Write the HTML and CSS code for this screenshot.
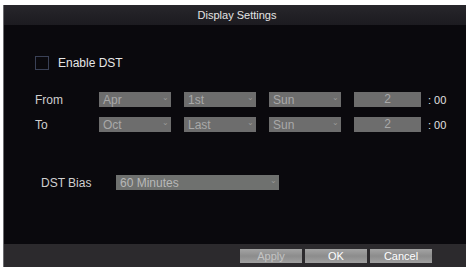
FILE: index.html
```html
<!DOCTYPE html>
<html lang="en">
<head>
  <meta charset="UTF-8">
  <title>Display Settings</title>
  <link rel="stylesheet" href="styles.css">
</head>
<body>

  <div class="dialog">
    <div class="title-bar">Display Settings</div>

    <div class="content">
      <label class="check-row">
        <span class="checkbox"></span>
        <span>Enable DST</span>
      </label>

      <div class="date-row first">
        <span class="row-label">From</span>
        <div class="select">Apr <span class="arrow">&#8964;</span></div>
        <div class="select">1st <span class="arrow">&#8964;</span></div>
        <div class="select">Sun <span class="arrow">&#8964;</span></div>
        <div class="hour">2</div>
        <span class="minutes">: 00</span>
      </div>

      <div class="date-row">
        <span class="row-label">To</span>
        <div class="select">Oct <span class="arrow">&#8964;</span></div>
        <div class="select">Last <span class="arrow">&#8964;</span></div>
        <div class="select">Sun <span class="arrow">&#8964;</span></div>
        <div class="hour">2</div>
        <span class="minutes">: 00</span>
      </div>

      <div class="bias-row">
        <span class="bias-label">DST Bias</span>
        <div class="select wide">60 Minutes <span class="arrow">&#8964;</span></div>
      </div>
    </div>

    <div class="button-bar">
      <div class="buttons">
        <button class="btn disabled">Apply</button>
        <button class="btn">OK</button>
        <button class="btn">Cancel</button>
      </div>
    </div>
  </div>

</body>
</html>
```

FILE: styles.css
```css
body {
  margin: 0;
  background: #fff;
  font-family: "Liberation Sans", Arial, sans-serif;
}

.dialog {
  margin: 5px 4px 0 3px;
  height: 262px;
  display: flex;
  flex-direction: column;
  background: #0a090d;
  border-left: 1px solid #6c6c70;
}

.title-bar {
  height: 20px;
  line-height: 20px;
  text-align: center;
  font-size: 11px;
  color: #e4e4e4;
  background: linear-gradient(#27262b, #1c1b20);
  padding-left: 4px;
}

.content {
  flex: 1;
  padding: 31px 0 0 31px;
  color: #e6e6e6;
  font-size: 12px;
}

.check-row {
  display: flex;
  align-items: center;
  gap: 9px;
  height: 14px;
}
.checkbox {
  width: 12px;
  height: 12px;
  border: 1px solid #3a4156;
}

.date-row {
  display: flex;
  align-items: center;
  height: 15px;
  margin-top: 10px;
}
.date-row.first {
  margin-top: 22px;
}
.row-label {
  width: 64px;
  color: #cfcfcf;
}

.select {
  width: 66px;
  height: 15px;
  margin-right: 13px;
  padding: 0 2px 0 4px;
  display: flex;
  justify-content: space-between;
  align-items: center;
  background: #6d6d6d;
  color: #a9a9a9;
  font-size: 12px;
}
.arrow {
  font-size: 8px;
  line-height: 8px;
  margin-top: -3px;
  color: #9a9a9a;
}

.hour {
  width: 67px;
  height: 15px;
  line-height: 15px;
  text-align: center;
  background: #6d6d6d;
  color: #a9a9a9;
}
.minutes {
  margin-left: 7px;
  color: #e0e0e0;
  font-size: 11px;
}

.bias-row {
  display: flex;
  align-items: center;
  margin-top: 43px;
  padding-left: 6px;
}
.bias-label {
  width: 75px;
  color: #d0d0d0;
}
.select.wide {
  width: 157px;
  background: #6f716f;
  color: #b8b8b8;
}

.button-bar {
  height: 23px;
  background: #2c2a2d;
  display: flex;
  justify-content: flex-end;
  align-items: center;
  padding-right: 34px;
}
.buttons {
  display: flex;
  gap: 3px;
  margin-top: 1px;
}
.btn {
  width: 62px;
  height: 14px;
  padding: 0;
  border: none;
  background: linear-gradient(#a4a4a4, #8c8c8c 50%, #a0a0a0);
  color: #fff;
  font-family: "Liberation Sans", Arial, sans-serif;
  font-size: 11px;
  line-height: 14px;
}
.btn.disabled {
  color: #c4c4c4;
}
```
